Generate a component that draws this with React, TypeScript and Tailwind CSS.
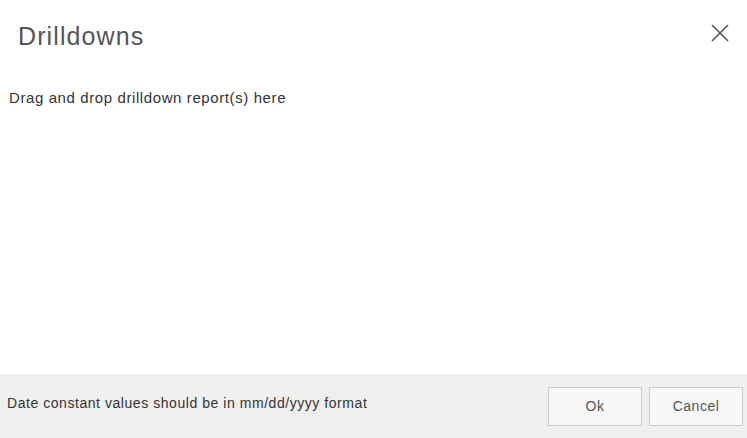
export default function App() {
  return (
    <div
      className="w-[747px] h-[438px] bg-white flex flex-col text-[#333]"
      style={{ fontFamily: '"Liberation Sans", Arial, sans-serif' }}
    >
      <header className="flex items-start justify-between pl-[18px] pr-[18px] pt-[21px] h-[80px]">
        <h1 className="text-[25px] leading-[30px] font-normal tracking-[1.1px] text-[#555]">Drilldowns</h1>
        <button className="mt-[3px] text-[#555]" aria-label="Close">
          <svg width="18" height="18" viewBox="0 0 18 18" fill="none" stroke="currentColor" strokeWidth="1.6">
            <path d="M1 1l16 16M17 1L1 17" />
          </svg>
        </button>
      </header>
      <div className="flex-1 px-[9px] pt-[9px] text-[15px] leading-[18px] tracking-[0.6px]">
        Drag and drop drilldown report(s) here
      </div>
      <footer className="h-[64px] bg-[#efefef] flex items-center justify-between pl-[7px] pr-[4px] pt-[1px]">
        <span className="mb-[6px] text-[14px] tracking-[0.55px] text-[#333]">
          Date constant values should be in mm/dd/yyyy format
        </span>
        <div className="flex gap-[7px]">
          <button className="w-[94px] h-[39px] bg-[#f7f7f7] border border-[#ccc] text-[14px] tracking-[0.5px] text-[#555]">
            Ok
          </button>
          <button className="w-[94px] h-[39px] bg-[#f7f7f7] border border-[#ccc] text-[14px] tracking-[0.5px] text-[#555]">
            Cancel
          </button>
        </div>
      </footer>
    </div>
  );
}
